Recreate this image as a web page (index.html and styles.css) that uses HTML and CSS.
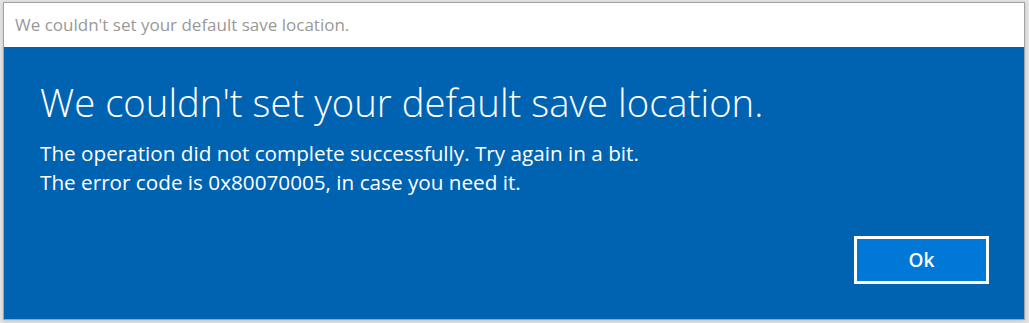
FILE: index.html
```html
<!DOCTYPE html>
<html lang="en">

<head>
    <meta charset="UTF-8" />
    <title>We couldn't set your default save location.</title>
    <link rel="stylesheet" href="styles.css">
</head>

<body>
    <div class="window">
        <header class="title-bar">We couldn't set your default save location.</header>
        <main class="dialog">
            <h1>We couldn't set your default save location.</h1>
            <p>The operation did not complete successfully. Try again in a bit.</p>
            <p>The error code is 0x80070005, in case you need it.</p>
            <div class="actions">
                <button class="ok-button">Ok</button>
            </div>
        </main>
    </div>
</body>

</html>
```

FILE: styles.css
```css
body {
    margin: 0;
    padding: 2px 4px 3px 3px;
    background: #e4e4e4;
    font-family: 'Open Sans', 'Noto Sans', sans-serif;
}

.window {
    height: 316px;
    border: 1px solid #a3a3a3;
    display: flex;
    flex-direction: column;
    box-shadow: 0 1px 4px rgba(0, 0, 0, 0.15);
}

.title-bar {
    height: 44px;
    background: #ffffff;
    color: #999999;
    font-size: 17px;
    line-height: 44px;
    padding-left: 11px;
}

.dialog {
    flex: 1;
    background: #0063b1;
    color: #ffffff;
    padding: 29px 35px 35px 36px;
    display: flex;
    flex-direction: column;
}

.dialog h1 {
    margin: 0 0 11px 0;
    font-size: 38.3px;
    font-weight: 300;
    line-height: 52px;
}

.dialog p {
    margin: 0;
    font-size: 20.7px;
    line-height: 29px;
}

.actions {
    display: flex;
    justify-content: flex-end;
    margin-top: auto;
}

.ok-button {
    width: 135px;
    height: 48px;
    background: #0078d7;
    border: 3px solid #ffffff;
    color: #ffffff;
    font-family: inherit;
    font-size: 19px;
    font-weight: 600;
}
```
